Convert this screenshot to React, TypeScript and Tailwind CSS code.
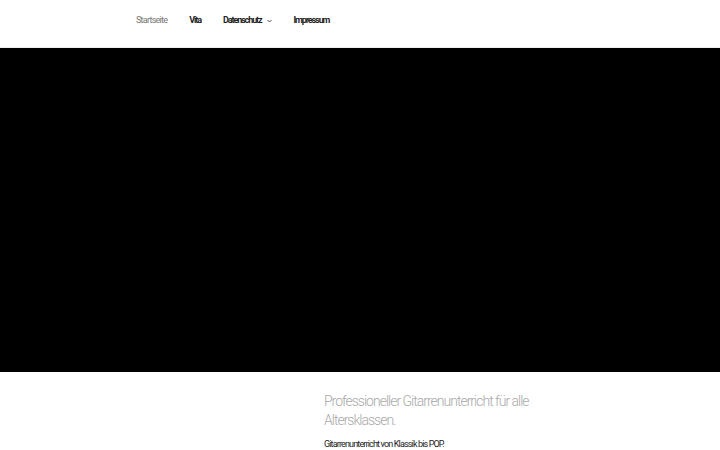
import React from "react";

const navItems = [
  { label: "Startseite", active: true },
  { label: "Vita" },
  { label: "Datenschutz", submenu: true },
  { label: "Impressum" },
];

export default function App() {
  return (
    <div className="min-h-[450px] bg-white font-['Roboto',sans-serif] overflow-hidden">
      <header className="h-12 border-b border-[#eeeeee] bg-white">
        <nav className="flex items-center h-[41px] pl-[136px] gap-[22px]">
          {navItems.map((item) => (
            <a
              key={item.label}
              href="#"
              className={`flex items-center text-[9px] ${
                item.active
                  ? "text-[#767676] font-normal tracking-[-0.75px]"
                  : "text-[#222222] font-bold tracking-[-1.1px]"
              }`}
            >
              {item.label}
              {item.submenu && (
                <svg className="ml-[5px] w-[5px] h-[4px]" viewBox="0 0 10 6" fill="none">
                  <path d="M1 1l4 4 4-4" stroke="#222" strokeWidth="1.6" />
                </svg>
              )}
            </a>
          ))}
        </nav>
      </header>

      <div className="h-[324px] bg-black" />

      <main className="pl-[324px] pt-[20px]">
        <h2 className="w-[220px] text-[14px] leading-[19px] font-light text-[#aaaaaa] tracking-[-1px]">
          Professioneller Gitarrenunterricht für alle Altersklassen.
        </h2>
        <p className="mt-[8px] text-[9px] text-[#222222] tracking-[-0.85px]">
          Gitarrenunterricht von Klassik bis POP.
        </p>
      </main>
    </div>
  );
}
